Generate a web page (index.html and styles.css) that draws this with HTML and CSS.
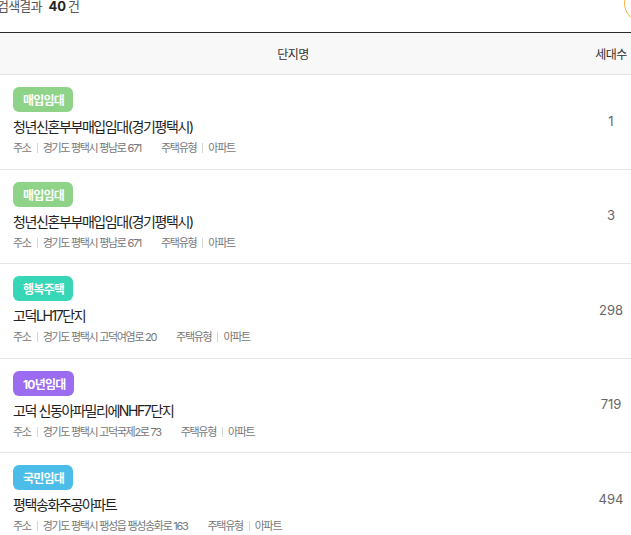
FILE: index.html
```html
<!DOCTYPE html>
<html lang="ko">
<head>
<meta charset="utf-8">
<title>검색결과</title>
<link rel="stylesheet" href="styles.css">
</head>
<body>
<div class="page">
  <div class="topbar">
    <p class="count">검색결과 <strong>40</strong>건</p>
    <button class="round-btn" aria-label="필터"></button>
  </div>
  <div class="table">
    <div class="thead">
      <div class="th th-name">단지명</div>
      <div class="th th-units">세대수</div>
    </div>

    <div class="row">
      <div class="cell-name">
        <span class="badge badge-green">매입임대</span>
        <p class="title">청년신혼부부매입임대(경기평택시)</p>
        <p class="meta"><span>주소</span><i class="sep"></i><span>경기도 평택시 평남로 671</span><span class="gap"></span><span>주택유형</span><i class="sep"></i><span>아파트</span></p>
      </div>
      <div class="cell-units">1</div>
    </div>

    <div class="row">
      <div class="cell-name">
        <span class="badge badge-green">매입임대</span>
        <p class="title">청년신혼부부매입임대(경기평택시)</p>
        <p class="meta"><span>주소</span><i class="sep"></i><span>경기도 평택시 평남로 671</span><span class="gap"></span><span>주택유형</span><i class="sep"></i><span>아파트</span></p>
      </div>
      <div class="cell-units">3</div>
    </div>

    <div class="row">
      <div class="cell-name">
        <span class="badge badge-teal">행복주택</span>
        <p class="title">고덕LH17단지</p>
        <p class="meta"><span>주소</span><i class="sep"></i><span>경기도 평택시 고덕여염로 20</span><span class="gap"></span><span>주택유형</span><i class="sep"></i><span>아파트</span></p>
      </div>
      <div class="cell-units">298</div>
    </div>

    <div class="row">
      <div class="cell-name">
        <span class="badge badge-purple">10년임대</span>
        <p class="title">고덕 신동아파밀리에NHF7단지</p>
        <p class="meta"><span>주소</span><i class="sep"></i><span>경기도 평택시 고덕국제2로 73</span><span class="gap"></span><span>주택유형</span><i class="sep"></i><span>아파트</span></p>
      </div>
      <div class="cell-units">719</div>
    </div>

    <div class="row">
      <div class="cell-name">
        <span class="badge badge-blue">국민임대</span>
        <p class="title">평택송화주공아파트</p>
        <p class="meta"><span>주소</span><i class="sep"></i><span>경기도 평택시 팽성읍 팽성송화로 163</span><span class="gap"></span><span>주택유형</span><i class="sep"></i><span>아파트</span></p>
      </div>
      <div class="cell-units">494</div>
    </div>
  </div>
</div>
</body>
</html>
```

FILE: styles.css
```css
* { box-sizing: border-box; }

html, body {
  margin: 0;
  padding: 0;
  background: #fff;
  overflow: hidden;
}

body {
  font-family: "Inter", "Noto Sans CJK KR", sans-serif;
  color: #222;
}

.page {
  margin-left: -3px;
  margin-top: -15px;
  width: 670px;
}

.topbar {
  display: flex;
  align-items: center;
  justify-content: space-between;
  height: 40px;
  margin-bottom: 7px;
  padding-right: 3px;
}

.count {
  margin: 0;
  font-size: 13px;
  color: #555;
  letter-spacing: -0.8px;
}

.count strong {
  font-weight: 700;
  color: #222;
  margin: 0 2px 0 4px;
  letter-spacing: 0;
}

.round-btn {
  width: 40px;
  height: 40px;
  border-radius: 50%;
  border: 1px solid #f2b53c;
  background: #fff;
  padding: 0;
  margin-top: -4px;
}

.table {
  width: 636px;
  border-top: 1px solid #2a2a2a;
}

.thead {
  display: grid;
  grid-template-columns: 592px 44px;
  height: 42px;
  background: #f8f8f8;
  border-bottom: 1px solid #e3e3e3;
}

.th {
  display: flex;
  align-items: center;
  justify-content: center;
  font-size: 12px;
  color: #333;
  letter-spacing: -0.6px;
}

.row {
  display: grid;
  grid-template-columns: 592px 44px;
  height: 94.5px;
  border-bottom: 1px solid #e6e6e6;
}

.cell-name {
  padding: 12px 0 0 16px;
  display: flex;
  flex-direction: column;
  align-items: flex-start;
}

.badge {
  display: inline-flex;
  align-items: center;
  height: 25px;
  padding: 0 9px 0 10px;
  border-radius: 6px;
  color: #fff;
  font-size: 12px;
  font-weight: 700;
  letter-spacing: -0.8px;
}

.badge-green { background: #8ed387; }
.badge-teal { background: #36d6b6; }
.badge-purple { background: #9b6cf0; }
.badge-blue { background: #4bbde8; }

.title {
  margin: 6px 0 0;
  font-size: 14px;
  line-height: 18px;
  color: #222;
  letter-spacing: -1.4px;
}

.meta {
  margin: 5px 0 0;
  display: flex;
  align-items: center;
  font-size: 11px;
  line-height: 14px;
  color: #777;
  letter-spacing: -1.3px;
}

.sep {
  width: 1px;
  height: 10px;
  background: #d6d6d6;
  margin: 0 5px 0 6px;
}

.gap { width: 20px; }

.cell-units {
  display: flex;
  align-items: center;
  justify-content: center;
  font-size: 13px;
  color: #666;
  margin-top: -2px;
}
```
